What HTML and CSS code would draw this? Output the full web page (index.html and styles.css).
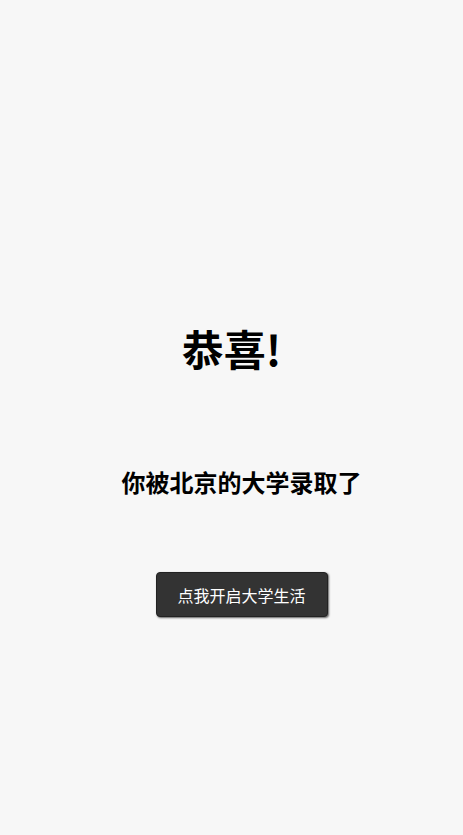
FILE: index.html
```html
<!DOCTYPE html>
<html lang="zh">
<head>
<meta charset="utf-8">
<link rel="stylesheet" href="styles.css">
</head>
<body>
<main class="page">
  <h1 class="title">恭喜!</h1>
  <h2 class="subtitle">你被北京的大学录取了</h2>
  <button class="start-btn">点我开启大学生活</button>
</main>
</body>
</html>
```
FILE: styles.css
```css
html, body {
  margin: 0;
  padding: 0;
  background: #f7f7f7;
  font-family: "Noto Sans CJK SC", "Liberation Sans", sans-serif;
}
.page {
  display: flex;
  flex-direction: column;
  align-items: center;
  padding-top: 324px;
  min-height: 835px;
  box-sizing: border-box;
}
.title {
  margin: 0;
  font-size: 42px;
  line-height: 48px;
  font-weight: bold;
  color: #000;
}
.subtitle {
  margin: 94px 0 0 20px;
  font-size: 24px;
  line-height: 32px;
  font-weight: bold;
  color: #000;
}
.start-btn {
  margin: 74px 0 0 20px;
  width: 172px;
  height: 45px;
  background: #333333;
  color: #fff;
  border: 1px solid #222;
  border-radius: 4px;
  box-shadow: 1px 1px 2px rgba(0,0,0,0.6);
  font-family: "Noto Sans CJK SC", sans-serif;
  font-size: 16px;
  padding: 0;
}
```
